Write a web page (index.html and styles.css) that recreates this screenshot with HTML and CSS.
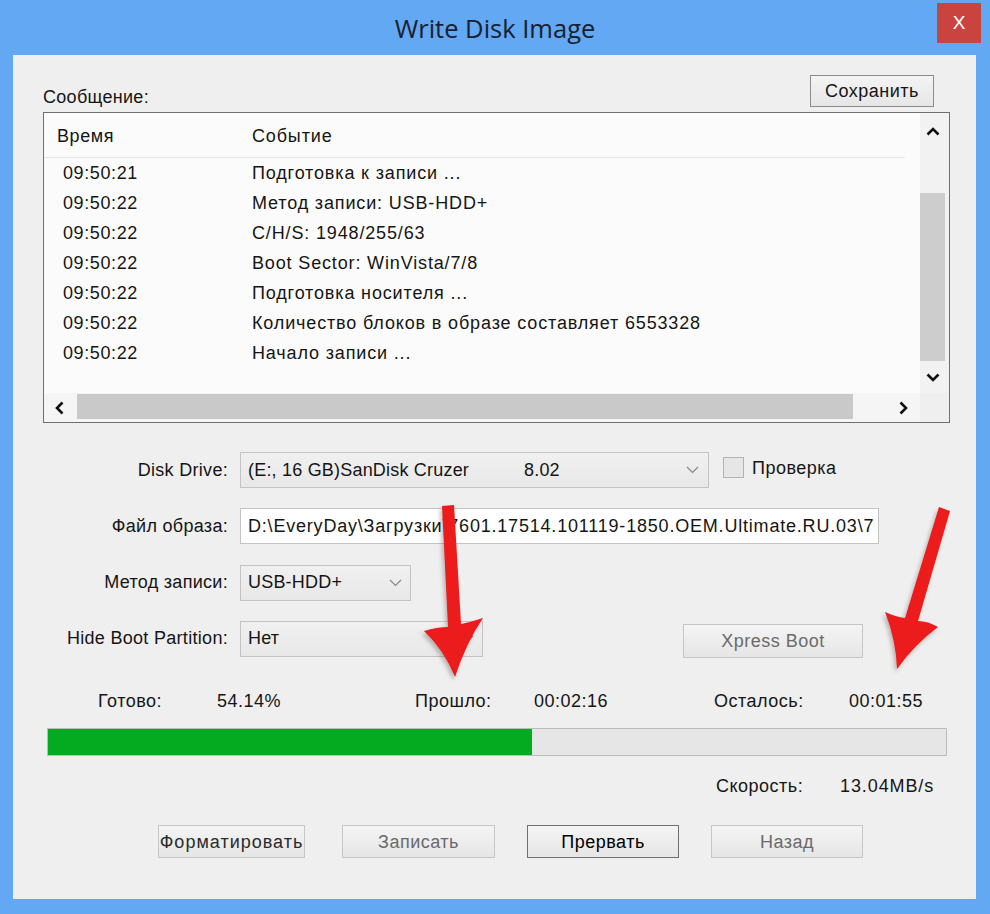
FILE: index.html
```html
<!DOCTYPE html>
<html lang="ru">
<head>
<meta charset="utf-8">
<title>Write Disk Image</title>
<link rel="stylesheet" href="styles.css">
</head>
<body>
<div class="window">
  <div class="titlebar">
    <div class="tb-space"></div>
    <div class="title">Write Disk Image</div>
    <div class="tb-right"><div class="close">X</div></div>
  </div>
  <div class="client">
    <div class="top-row">
      <div class="msg-label">Сообщение:</div>
      <div class="btn save-btn">Сохранить</div>
    </div>
    <div class="listview">
      <div class="lv-content">
        <div class="lv-header">
          <div class="col-time h">Время</div>
          <div class="col-event">Событие</div>
        </div>
        <div class="lv-row"><div class="col-time">09:50:21</div><div class="col-event">Подготовка к записи ...</div></div>
        <div class="lv-row"><div class="col-time">09:50:22</div><div class="col-event">Метод записи: USB-HDD+</div></div>
        <div class="lv-row"><div class="col-time">09:50:22</div><div class="col-event">C/H/S: 1948/255/63</div></div>
        <div class="lv-row"><div class="col-time">09:50:22</div><div class="col-event">Boot Sector: WinVista/7/8</div></div>
        <div class="lv-row"><div class="col-time">09:50:22</div><div class="col-event">Подготовка носителя ...</div></div>
        <div class="lv-row"><div class="col-time">09:50:22</div><div class="col-event">Количество блоков в образе составляет 6553328</div></div>
        <div class="lv-row"><div class="col-time">09:50:22</div><div class="col-event">Начало записи ...</div></div>
      </div>
      <div class="vscroll">
        <div class="sb-btn sb-up"><svg width="14" height="9" viewBox="0 0 14 9"><polyline points="1.5,7.5 7,2 12.5,7.5" fill="none" stroke="#111" stroke-width="2.6"/></svg></div>
        <div class="vtrack"><div class="vthumb"></div></div>
        <div class="sb-btn sb-down"><svg width="14" height="9" viewBox="0 0 14 9"><polyline points="1.5,1.5 7,7 12.5,1.5" fill="none" stroke="#111" stroke-width="2.6"/></svg></div>
      </div>
      <div class="hscroll">
        <div class="hb-left"><svg width="9" height="14" viewBox="0 0 9 14"><polyline points="7.5,1.5 2,7 7.5,12.5" fill="none" stroke="#111" stroke-width="2.6"/></svg></div>
        <div class="htrack"><div class="hthumb"></div></div>
        <div class="hb-right"><svg width="9" height="14" viewBox="0 0 9 14"><polyline points="1.5,1.5 7,7 1.5,12.5" fill="none" stroke="#111" stroke-width="2.6"/></svg></div>
      </div>
      <div class="corner"></div>
    </div>

    <div class="form">
      <div class="flabel">Disk Drive:</div>
      <div class="fctrl">
        <div class="combo combo-drive">
          <span class="drive-name">(E:, 16 GB)SanDisk Cruzer</span><span>8.02</span>
          <svg class="chev" width="13" height="8" viewBox="0 0 13 8"><polyline points="1,1 6.5,6.5 12,1" fill="none" stroke="#888" stroke-width="1.2"/></svg>
        </div>
        <div class="check"></div>
        <div class="check-label">Проверка</div>
      </div>

      <div class="flabel">Файл образа:</div>
      <div class="fctrl">
        <div class="textbox">D:\EveryDay\Загрузки\7601.17514.101119-1850.OEM.Ultimate.RU.03\7</div>
      </div>

      <div class="flabel">Метод записи:</div>
      <div class="fctrl">
        <div class="combo combo-method">
          <span>USB-HDD+</span>
          <svg class="chev" width="13" height="8" viewBox="0 0 13 8"><polyline points="1,1 6.5,6.5 12,1" fill="none" stroke="#888" stroke-width="1.2"/></svg>
        </div>
      </div>

      <div class="flabel">Hide Boot Partition:</div>
      <div class="fctrl">
        <div class="combo combo-hide">
          <span>Нет</span>
          <svg class="chev" width="13" height="8" viewBox="0 0 13 8"><polyline points="1,1 6.5,6.5 12,1" fill="none" stroke="#888" stroke-width="1.2"/></svg>
        </div>
        <div class="btn xpress disabled">Xpress Boot</div>
      </div>
    </div>

    <div class="status-row">
      <div class="s1">Готово:</div>
      <div class="s2">54.14%</div>
      <div class="s3">Прошло:</div>
      <div class="s4">00:02:16</div>
      <div class="s5">Осталось:</div>
      <div class="s6">00:01:55</div>
    </div>

    <div class="progress"><div class="progress-fill" style="width:53.9%"></div></div>

    <div class="speed-row">
      <div class="sp-label">Скорость:</div>
      <div class="sp-val">13.04MB/s</div>
    </div>

    <div class="buttons">
      <div class="btn b-format">Форматировать</div>
      <div class="btn b-write disabled">Записать</div>
      <div class="btn b-stop">Прервать</div>
      <div class="btn b-back disabled">Назад</div>
    </div>
  </div>

  <svg class="arrows" width="990" height="914" viewBox="0 0 990 914">
    <defs>
      <filter id="sh" x="-20%" y="-20%" width="140%" height="140%">
        <feDropShadow dx="-2" dy="3" stdDeviation="2" flood-color="#000" flood-opacity="0.25"/>
      </filter>
    </defs>
    <path filter="url(#sh)" fill="#ec1b1b" d="M442,506 L454,505 L461,624 Q471,622 483,618 Q466,643 455,677 Q444,650 424,631 Q437,627 448,627 Z"/>
    <path filter="url(#sh)" fill="#ec1b1b" d="M939,507 L950,511 L918,621 Q928,621 938,627 Q915,644 897,669 Q896,640 885,612 Q896,617 905,618 Z"/>
  </svg>
</div>
</body>
</html>
```

FILE: styles.css
```css
* { box-sizing: border-box; }
html, body { margin: 0; padding: 0; }
body {
  background: #62a8f2;
  font-family: "Liberation Sans", Arial, sans-serif;
  font-size: 18px;
  letter-spacing: 0.5px;
  color: #151515;
}
.window {
  position: relative;
  width: 990px;
  height: 914px;
  background: #62a8f2;
  overflow: hidden;
}
.titlebar {
  height: 55px;
  display: grid;
  grid-template-columns: 1fr auto 1fr;
  letter-spacing: 0;
}
.title {
  align-self: center;
  font-family: "Open Sans", "Liberation Sans", sans-serif;
  font-size: 25.5px;
  color: #1a2030;
  padding-top: 1px;
}
.tb-right { display: flex; justify-content: flex-end; align-items: flex-start; }
.close {
  margin-top: 3px;
  margin-right: 9px;
  width: 44px;
  height: 40px;
  background: #c9433f;
  color: #fff;
  font-family: "Liberation Sans", sans-serif;
  font-size: 19px;
  display: flex;
  align-items: center;
  justify-content: center;
}
.client {
  margin: 0 14px 0 13px;
  height: 844px;
  background: #efefef;
}
.top-row {
  margin-left: 30px;
  width: 907px;
  height: 57px;
  display: flex;
  justify-content: space-between;
  align-items: flex-start;
}
.msg-label { margin-top: 32px; line-height: 20px; letter-spacing: 0.3px; }
.btn {
  display: flex;
  align-items: center;
  justify-content: center;
  border: 1px solid #adadad;
  background: linear-gradient(#f4f4f4, #e6e6e6);
  color: #151515;
}
.save-btn {
  margin-top: 20px;
  margin-right: 16px;
  width: 124px;
  height: 32px;
  border-color: #8c8c8c;
  padding-top: 1px;
}
.listview {
  margin-left: 30px;
  width: 907px;
  height: 311px;
  border: 1px solid #6f6f6f;
  background: #fbfbfb;
  display: grid;
  grid-template-columns: 876px 29px;
  grid-template-rows: 280px 29px;
  letter-spacing: 0.85px;
}
.lv-content { overflow: hidden; }
.lv-header {
  display: flex;
  height: 45px;
  width: 861px;
  border-bottom: 1px solid #e6e6e6;
  align-items: center;
  padding-top: 3px;
}
.col-time { width: 208px; padding-left: 19px; letter-spacing: 0.6px; }
.col-time.h { padding-left: 13px; letter-spacing: 0.6px; }
.col-event { flex: 1; white-space: nowrap; }
.lv-row {
  display: flex;
  height: 30px;
  align-items: center;
  padding-top: 1px;
}
.vscroll {
  background: #f2f2f2;
  display: flex;
  flex-direction: column;
}
.sb-btn { display: flex; align-items: center; justify-content: center; padding-right: 4px; }
.sb-up { height: 36px; }
.sb-down { height: 32px; }
.vtrack { flex: 1; }
.vthumb {
  margin-top: 44px;
  width: 25px;
  height: 168px;
  background: #cdcdcd;
}
.hscroll {
  background: #f5f5f5;
  display: flex;
}
.hb-left { width: 28px; display: flex; align-items: center; justify-content: center; padding-left: 2px; }
.htrack { flex: 1; }
.hthumb {
  margin-top: 1px;
  margin-left: 5px;
  width: 776px;
  height: 25px;
  background: #c9c9c9;
}
.hb-right { width: 34px; display: flex; align-items: center; justify-content: center; }
.corner { background: #efefef; }

.form {
  margin-top: 29px;
  display: grid;
  grid-template-columns: 215px 1fr;
  column-gap: 12px;
  grid-auto-rows: 36px;
  row-gap: 20.33px;
}
.flabel {
  display: flex;
  align-items: center;
  justify-content: flex-end;
  white-space: nowrap;
  letter-spacing: 0.3px;
}
.fctrl { display: flex; align-items: center; }
.combo {
  position: relative;
  height: 36px;
  border: 1px solid #c3c3c3;
  background: linear-gradient(#f0f0f0, #e8e8e8);
  display: flex;
  align-items: center;
  padding-left: 7px;
  white-space: nowrap;
  letter-spacing: 0.2px;
}
.chev { margin-left: auto; }
.combo-drive { width: 469px; padding-right: 9px; }
.drive-name { width: 276px; }
.combo-method { width: 171px; padding-right: 8px; }
.combo-hide { width: 243px; padding-right: 8px; }
.check {
  margin-left: 14px;
  width: 21px;
  height: 21px;
  border: 1px solid #b3b3b3;
  background: #e6e6e6;
  margin-top: -6px;
}
.check-label { margin-left: 8px; margin-top: -4px; }
.textbox {
  width: 639px;
  height: 36px;
  border: 1px solid #c3c3c3;
  background: #fff;
  display: flex;
  align-items: center;
  padding-left: 7px;
  white-space: nowrap;
  overflow: hidden;
  letter-spacing: 0.8px;
}
.xpress {
  margin-left: 200px;
  width: 180px;
  height: 34px;
  margin-top: 5px;
  border-color: #c6c6c6;
}
.disabled { color: #6a6a6a; border-color: #c6c6c6; }

.status-row {
  margin-top: 33px;
  margin-left: 85px;
  display: flex;
  line-height: 22px;
  height: 22px;
}
.s1 { width: 119px; }
.s2 { width: 198px; }
.s3 { width: 119px; }
.s4 { width: 180px; }
.s5 { width: 135px; }
.progress {
  margin-top: 16px;
  margin-left: 34px;
  width: 900px;
  height: 28px;
  border: 1px solid #bcbcbc;
  background: #e6e6e6;
}
.progress-fill { height: 100%; background: #04ab20; }
.speed-row {
  margin-top: 19px;
  margin-left: 703px;
  display: flex;
  line-height: 22px;
}
.sp-label { width: 124px; }
.sp-val { letter-spacing: 0.9px; }
.buttons {
  margin-top: 28px;
  display: flex;
  height: 33px;
}
.buttons .btn { height: 33px; padding-top: 2px; }
.b-format { margin-left: 145px; width: 147px; color: #2a2a2a; border-color: #c6c6c6; white-space: nowrap; letter-spacing: 1px; }
.b-write { margin-left: 37px; width: 153px; }
.b-stop { margin-left: 32px; width: 152px; border-color: #6f6f6f; color: #000; font-weight: 500; }
.b-back { margin-left: 32px; width: 152px; }

.arrows {
  position: absolute;
  left: 0;
  top: 0;
  pointer-events: none;
}
```
